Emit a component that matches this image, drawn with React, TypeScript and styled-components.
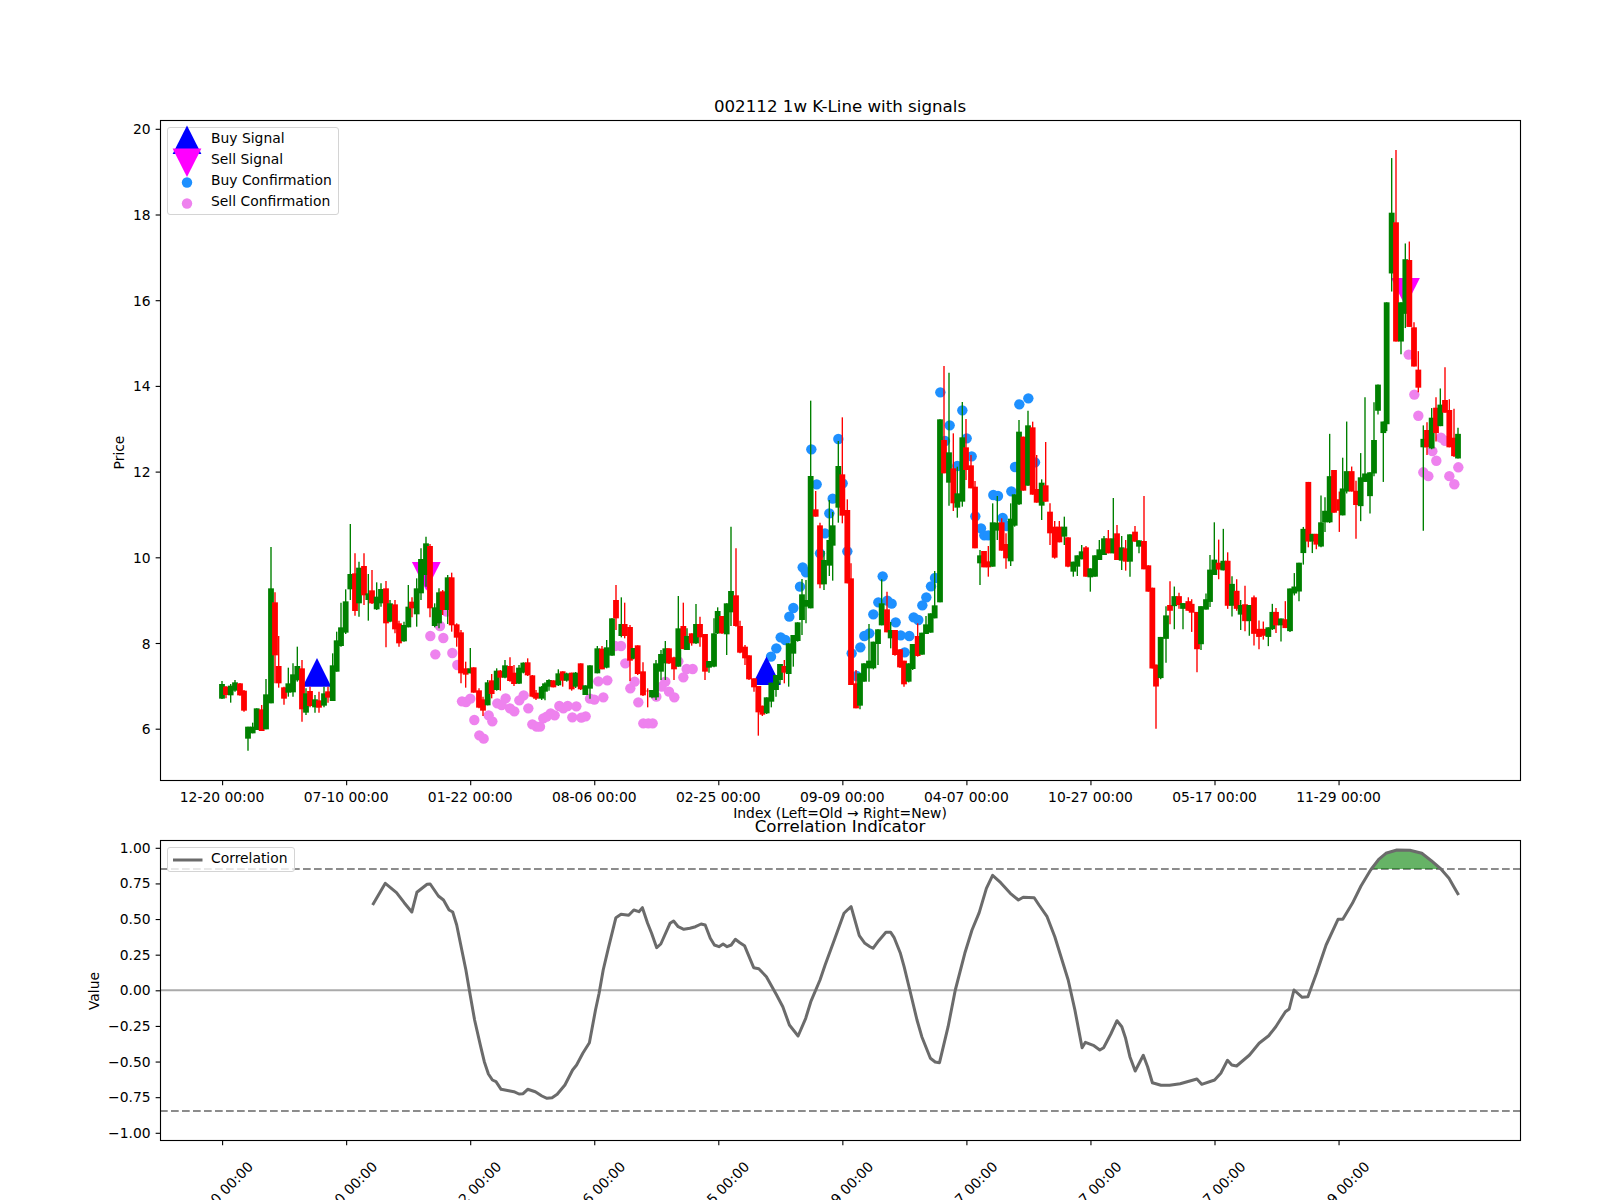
import styled, { createGlobalStyle } from "styled-components";

const GlobalStyle = createGlobalStyle`
  html, body {
    margin: 0;
    padding: 0;
    background: #fff;
    overflow: hidden;
  }
`;

const fontStack = `"DejaVu Sans", "Liberation Sans", sans-serif`;
const tickSize = 4.86;

type Candle = { x: number; up: boolean; wickTop: number; top: number; bottom: number; wickBottom: number };

// values read off the chart, one block per stretch of the x axis: x colour wickTop bodyTop bodyBottom wickBottom
const parseCandles = (x0: number, y0: number, ky: number, rows: string): Candle[] =>
  rows
    .trim()
    .split("\n")
    .map((row) => {
      const [x, c, a, b, d, e] = row.trim().split(" ");
      return {
        x: x0 + Number(x) / 3,
        up: c === "g",
        wickTop: y0 + Number(a) / ky,
        top: y0 + Number(b) / ky,
        bottom: y0 + Number(d) / ky,
        wickBottom: y0 + Number(e) / ky,
      };
    });

const candles: Candle[] = [
  ...parseCandles(200, 500, 3, `
66 g 543 552 596 597
78 r 558 560 585 595
92 g 552 557 586 608
105 g 540 547 572 575
120 r 549 550 586 587
132 r 570 572 632 635
144 g 680 680 716 752
158 g 668 680 700 700
170 g 625 625 690 690
185 r 615 628 693 693
198 g 537 583 688 688
213 g 141 265 610 610
225 r 277 307 466 550
236 r 408 498 550 563
252 r 560 562 596 614
265 g 503 550 578 590
279 g 490 523 577 590
292 g 440 498 541 545
306 r 480 505 628 665
318 g 565 580 638 645
330 r 560 573 618 622
345 g 585 598 622 638
357 r 575 601 623 638
372 g 560 580 617 622
384 r 560 574 593 608
398 g 460 496 603 603
410 g 395 421 515 515
423 g 308 382 438 440
437 g 268 304 398 402
451 g 72 222 268 300
465 r 160 220 333 347
477 g 185 203 310 350
492 r 160 198 286 315
505 g 222 280 300 362
516 r 210 271 310 312
530 g 247 290 328 330
543 g 250 267 310 320
558 r 243 265 370 442
570 g 300 310 365 367
585 r 300 313 388 400
597 r 362 370 430 440
612 g 365 375 424 425
625 g 255 320 382 382
636 r 292 305 325 352
650 g 235 265 343 380
663 g 145 177 280 300
678 g 110 130 225 260
690 r 132 138 325 352
704 g 310 322 378 382
717 g 265 277 370 385
728 r 270 274 330 345
743 g 225 232 330 372
755 r 218 232 376 395
770 r 370 373 413 440
783 r 390 397 520 550
797 r 485 505 524 563
811 g 444 505 520 520
821 r 502 502 578 578
837 r 565 571 623 625
849 r 590 598 632 648
863 g 540 547 616 616
875 r 522 541 582 595
890 g 505 512 570 572
901 r 510 512 533 572
915 g 480 496 533 535
930 r 472 498 543 545
942 r 495 518 552 558
957 g 495 503 551 552
970 g 487 488 518 520
983 r 475 487 526 528
997 r 525 526 590 592
1008 r 570 578 596 600
`),
  ...parseCandles(540, 500, 3, `
5 g 558 560 596 600
15 g 547 550 575 601
27 g 538 540 560 572
40 r 541 541 562 562
55 g 508 520 556 558
68 r 514 514 542 560
80 g 518 520 542 545
95 r 518 518 568 572
107 g 516 518 560 564
122 r 490 490 568 570
136 g 556 556 585 585
150 g 496 496 566 596
172 g 438 445 520 520
186 r 438 446 508 508
200 g 420 442 503 505
216 g 355 355 467 467
228 r 255 300 355 390
244 g 292 372 408 412
254 r 308 372 408 415
270 r 375 381 482 543
281 g 445 444 476 478
293 r 436 436 522 525
309 r 487 514 586 588
323 r 565 572 574 622
336 g 570 570 592 595
348 g 480 490 592 600
363 g 450 462 515 540
376 g 423 445 490 540
387 r 445 445 490 492
402 r 470 472 508 540
415 g 288 385 500 500
430 r 308 378 447 448
441 g 385 408 450 450
455 r 400 400 430 437
468 g 312 372 430 432
480 r 350 372 412 440
495 r 402 402 515 540
507 g 483 483 503 518
522 g 355 400 500 502
533 g 322 333 400 402
546 r 348 348 400 402
560 g 310 310 403 465
573 g 80 273 337 378
588 r 145 286 378 380
600 r 362 378 458 460
615 r 435 440 475 495
627 r 466 466 538 540
642 r 535 535 562 575
655 r 558 558 637 707
667 r 617 617 644 648
680 g 592 592 640 642
694 g 548 548 605 622
708 g 525 525 570 590
720 g 492 492 540 552
733 r 480 498 518 550
746 g 430 430 522 560
760 g 405 405 461 500
773 g 367 367 423 425
`),
  ...parseCandles(800, 340, 3, `
6 g 717 763 840 885
18 g 720 780 800 850
32 g 182 408 805 805
47 r 453 508 530 530
60 r 548 556 733 745
72 g 633 660 733 750
88 g 480 600 677 708
98 g 516 556 617 722
115 g 303 378 503 548
127 r 232 403 527 550
142 r 478 510 730 730
153 r 670 715 1035 1035
168 r 990 1030 1105 1105
180 g 1000 1000 1097 1108
192 g 970 970 1025 1025
207 g 852 962 985 1025
220 g 905 905 985 988
234 g 868 868 912 975
245 g 718 790 856 856
261 r 755 808 877 877
272 g 846 870 895 925
285 r 870 870 945 947
300 r 928 928 982 984
312 r 962 962 1033 1040
326 g 970 970 1025 1027
338 g 912 912 987 990
353 r 850 888 948 950
366 g 878 878 944 944
378 g 828 853 882 882
392 g 820 820 878 878
404 g 693 796 835 835
420 g 238 238 787 787
432 r 78 300 400 400
447 g 98 337 428 497
460 r 280 385 490 513
472 g 380 460 503 533
487 g 186 292 485 500
498 r 237 322 390 420
513 r 345 376 445 445
525 r 423 440 625 625
540 g 630 646 670 735
552 r 633 633 682 682
565 r 618 664 682 710
578 g 490 547 680 680
592 g 468 548 572 600
605 r 535 547 632 632
618 r 580 612 655 686
632 g 490 536 664 678
644 g 463 463 557 560
657 g 240 275 493 495
670 r 290 290 452 452
684 g 212 256 437 437
698 r 245 262 464 464
710 r 345 447 488 488
725 g 418 428 497 540
737 r 306 436 485 485
750 r 490 515 580 615
764 r 543 560 653 656
778 r 543 560 607 607
793 g 530 560 590 615
804 r 592 592 680 682
820 g 665 665 695 710
832 g 646 646 680 708
845 g 615 634 658 658
858 r 618 622 710 710
871 g 685 685 712 755
885 g 646 646 710 710
898 g 600 628 660 660
912 g 588 595 645 645
925 r 570 595 640 640
940 g 474 595 640 640
951 r 555 580 660 660
965 g 588 622 662 690
977 r 600 625 665 692
990 g 583 583 665 710
1005 r 558 575 605 605
1017 g 601 601 620 640
1032 r 468 603 688 688
1045 r 676 676 755 755
`),
  ...parseCandles(1120, 130, 2.6, `
97 r 1190 1190 1400 1400
108 r 1390 1390 1447 1557
122 g 1318 1318 1425 1428
138 g 1238 1262 1323 1385
150 r 1173 1235 1250 1285
163 g 1187 1212 1238 1298
177 r 1203 1212 1235 1245
189 g 1230 1230 1245 1298
205 r 1215 1225 1250 1250
215 r 1220 1232 1255 1305
231 r 1253 1253 1350 1410
243 g 1238 1238 1337 1352
258 g 1205 1220 1247 1247
270 g 1105 1143 1227 1240
283 g 1020 1117 1157 1157
296 r 1065 1125 1143 1168
310 g 1037 1120 1145 1145
323 r 1098 1120 1237 1245
336 g 1160 1180 1237 1265
350 r 1168 1198 1245 1250
362 g 1222 1235 1260 1300
375 r 1185 1233 1277 1303
388 g 1235 1235 1277 1315
402 r 1210 1215 1310 1340
417 r 1275 1297 1318 1350
430 r 1278 1297 1315 1325
445 g 1293 1293 1318 1342
457 g 1232 1253 1298 1300
468 r 1243 1253 1288 1308
483 g 1270 1270 1288 1330
496 r 1225 1272 1295 1295
510 g 1192 1192 1303 1305
523 g 1152 1187 1205 1210
537 g 1125 1125 1200 1225
550 g 1032 1037 1100 1130
565 r 915 915 1070 1085
577 g 1050 1050 1070 1100
589 r 1050 1050 1078 1090
603 g 950 1020 1083 1085
615 g 955 990 1020 1045
629 g 790 900 1020 1022
642 r 884 884 995 995
658 r 940 960 990 1045
668 g 852 932 1002 1002
680 g 758 887 940 945
695 r 875 887 940 940
708 r 912 938 975 1063
722 g 840 903 978 1017
735 g 695 893 915 915
750 g 890 890 952 997
762 g 708 806 893 900
774 g 662 662 730 740
790 g 758 758 788 915
800 g 448 448 765 783
815 g 73 215 373 420
828 r 52 240 550 550
843 g 448 448 550 583
856 g 295 336 478 515
868 r 290 338 512 512
882 r 500 513 615 615
895 r 575 623 670 682
910 g 768 803 825 1042
921 r 760 780 825 845
935 g 723 748 828 830
948 r 695 722 788 810
961 g 672 714 770 770
975 r 617 702 735 735
988 r 700 728 825 825
1002 r 725 800 848 850
1014 g 774 790 854 854
`),
];

type Point = [number, number];

const crop = (x0: number, y0: number, kx: number, ky: number, pts: number[][]): Point[] =>
  pts.map(([x, y]) => [x0 + x / kx, y0 + y / ky]);

const sellConfirm: Point[] = [
  ...crop(200, 500, 3, 3, [
    [740, 335], [720, 378], [691, 408], [730, 414], [706, 463], [757, 459], [772, 495], [786, 604], [798, 606], [811, 596],
    [823, 660], [838, 706], [851, 716], [866, 646], [877, 664], [892, 610], [905, 615], [917, 595], [930, 625], [943, 634],
    [958, 601], [971, 586], [985, 625], [997, 673], [1010, 680],
  ]),
  ...crop(540, 500, 3, 3, [
    [0, 680], [10, 655], [20, 650], [32, 640], [44, 646], [58, 618], [70, 625], [83, 618], [109, 619], [97, 652], [124, 653],
    [137, 649], [150, 596], [163, 599], [190, 592], [175, 544], [202, 541], [256, 490], [243, 438], [225, 438], [271, 565],
    [284, 545], [295, 607], [310, 670], [325, 670], [338, 670], [349, 590], [365, 560], [376, 545], [387, 575], [403, 592],
    [415, 484], [430, 532], [440, 507], [458, 507],
  ]),
  ...crop(1120, 130, 3, 2.6, [
    [866, 584], [883, 688], [895, 743], [910, 890], [925, 900], [937, 835], [949, 860], [963, 800], [975, 808], [988, 900],
    [1003, 921], [1015, 877],
  ]),
];

const buyConfirm: Point[] = [
  ...crop(540, 500, 3, 3, [
    [693, 470], [709, 445], [722, 412], [736, 420], [748, 350], [760, 324],
  ]),
  ...crop(800, 340, 3, 3, [
    [0, 740], [8, 682], [18, 697], [34, 328], [50, 433], [60, 640], [75, 580], [88, 520], [98, 476], [115, 297], [128, 430],
    [142, 634], [155, 940], [170, 1008], [181, 922], [193, 888], [208, 880], [220, 823], [235, 787], [248, 709], [262, 782],
    [275, 791], [287, 847], [302, 886], [314, 937], [328, 888], [341, 832], [355, 840], [367, 796], [379, 772], [393, 739],
    [405, 714], [421, 157], [435, 303], [449, 256], [472, 378], [487, 211], [500, 295], [515, 349], [526, 529], [543, 565],
    [553, 586], [565, 586], [580, 465], [594, 468], [608, 534], [620, 558], [634, 454], [645, 381], [658, 193], [685, 175],
    [705, 367],
  ]),
];

const correlation: Point[] = [
  ...crop(70, 770, 1.96, 3, [
    [593, 405], [618, 340], [640, 368], [655, 398], [670, 426], [680, 367], [700, 343], [706, 342], [722, 378], [732, 390],
    [743, 420], [750, 426], [758, 465], [768, 540], [776, 600], [785, 680], [793, 750], [805, 830], [812, 875], [820, 912],
    [828, 930], [835, 935], [845, 958], [860, 962], [870, 965], [880, 972], [888, 971], [897, 958], [912, 965], [925, 978],
    [935, 985], [945, 983], [955, 973], [970, 945], [985, 900], [993, 885], [1005, 850], [1018, 818], [1030, 720], [1037, 670],
    [1045, 600], [1055, 535], [1070, 443], [1080, 433], [1095, 436], [1105, 420], [1115, 425], [1122, 413], [1132, 460],
    [1140, 490], [1150, 533], [1158, 522], [1176, 460], [1183, 453], [1192, 470], [1203, 478], [1215, 475], [1226, 470],
    [1237, 462], [1245, 465], [1255, 505], [1263, 525], [1272, 530], [1280, 522], [1288, 530], [1296, 525], [1304, 508],
    [1313, 518], [1322, 527], [1340, 593], [1350, 596], [1365, 620], [1385, 675], [1397, 710], [1410, 765], [1427, 798],
    [1442, 745], [1452, 695], [1470, 630], [1480, 585], [1498, 510], [1517, 430], [1525, 418], [1531, 410], [1547, 497],
    [1558, 520], [1568, 530],
  ]),
  ...crop(850, 770, 2.09, 3, [
    [48, 535], [60, 512], [75, 487], [85, 487], [92, 502], [105, 548], [113, 590], [125, 660], [140, 750], [150, 800], [168, 865],
    [178, 876], [187, 878], [205, 770], [220, 660], [240, 550], [255, 480], [270, 428], [285, 355], [298, 316], [315, 338],
    [335, 370], [352, 390], [362, 382], [385, 383], [395, 405], [412, 440], [428, 500], [456, 630], [470, 720], [485, 833],
    [492, 817], [510, 827], [522, 840], [530, 833], [545, 792], [558, 752], [568, 770], [576, 805], [585, 860], [596, 903],
    [613, 856], [622, 890], [632, 938], [650, 946], [668, 946], [690, 941], [725, 927], [735, 943], [762, 930], [775, 910],
    [789, 871], [798, 885], [808, 888], [835, 855], [855, 820], [875, 797], [890, 770], [910, 725], [918, 717], [928, 660],
    [945, 682], [957, 680], [975, 610], [995, 525], [1020, 448], [1030, 448], [1050, 400], [1068, 348], [1088, 300], [1105, 268],
    [1120, 250], [1143, 240], [1170, 241], [1195, 250], [1215, 272], [1235, 297], [1252, 325], [1262, 350], [1272, 375],
  ]),
];

const thresholdY = 869;

// area between the line and the 0.85 threshold, closed at both crossings
const overbought: Point[] = [
  [1371.5, thresholdY],
  ...correlation.filter(([x, y]) => y < thresholdY && x > 1371.5 && x < 1442.3),
  [1442.3, thresholdY],
];

const xTicks = [
  "12-20 00:00", "07-10 00:00", "01-22 00:00", "08-06 00:00", "02-25 00:00",
  "09-09 00:00", "04-07 00:00", "10-27 00:00", "05-17 00:00", "11-29 00:00",
].map((label, i) => ({ label, x: 222.6 + 124.05 * i }));

const priceTicks = [6, 8, 10, 12, 14, 16, 18, 20].map((p) => ({ label: String(p), y: 129.3 + (20 - p) * 42.85 }));

const valueTicks = [1, 0.75, 0.5, 0.25, 0, -0.25, -0.5, -0.75, -1].map((v) => ({
  label: (v < 0 ? "\u2212" : "") + Math.abs(v).toFixed(2),
  y: 990.8 - 142.5 * v,
}));

const toPoints = (pts: Point[]) => pts.map(([x, y]) => `${x.toFixed(1)},${y.toFixed(1)}`).join(" ");

const Figure = styled.div`
  width: 1600px;
  height: 1200px;
  background: #fff;
  font-family: ${fontStack};
  color: #000;
  display: flex;
  flex-direction: column;
`;

const Panel = styled.section<{ $height: number }>`
  position: relative;
  height: ${(p) => p.$height}px;
  flex: none;
`;

const ChartSvg = styled.svg`
  display: block;
  width: 100%;
  height: 100%;
  overflow: visible;
`;

const Frame = styled.rect`
  fill: none;
  stroke: #000;
  stroke-width: 1.11;
`;

const TickMark = styled.line`
  stroke: #000;
  stroke-width: 1.11;
`;

const TickLabel = styled.text<{ $anchor?: string }>`
  font-family: ${fontStack};
  font-size: 13.89px;
  fill: #000;
  text-anchor: ${(p) => p.$anchor ?? "middle"};
`;

const AxisTitle = styled.text`
  font-family: ${fontStack};
  font-size: 13.89px;
  fill: #000;
  text-anchor: middle;
`;

const PlotTitle = styled.text`
  font-family: ${fontStack};
  font-size: 16.67px;
  fill: #000;
  text-anchor: middle;
`;

const Wick = styled.line<{ $up: boolean }>`
  stroke: ${(p) => (p.$up ? "#008000" : "#ff0000")};
  stroke-width: 1.39;
`;

const Body = styled.rect<{ $up: boolean }>`
  fill: ${(p) => (p.$up ? "#008000" : "#ff0000")};
`;

const Dot = styled.circle<{ $color: string }>`
  fill: ${(p) => p.$color};
`;

const Marker = styled.polygon<{ $color: string }>`
  fill: ${(p) => p.$color};
`;

const RefLine = styled.line<{ $dashed?: boolean }>`
  stroke: ${(p) => (p.$dashed ? "#8c8c8c" : "#aaaaaa")};
  stroke-width: 2.08;
  stroke-dasharray: ${(p) => (p.$dashed ? "7.7 3.3" : "none")};
`;

const CorrLine = styled.polyline`
  fill: none;
  stroke: #6b6b6b;
  stroke-width: 3;
  stroke-linejoin: round;
`;

const CorrFill = styled.polygon`
  fill: #008000;
  fill-opacity: 0.6;
`;

const Legend = styled.div<{ $left: number; $top: number; $width: number }>`
  position: absolute;
  left: ${(p) => p.$left}px;
  top: ${(p) => p.$top}px;
  width: ${(p) => p.$width}px;
  box-sizing: border-box;
  padding: 0 0 2px;
  background: rgba(255, 255, 255, 0.8);
  border: 1px solid #d4d4d4;
  border-radius: 3px;
  display: flex;
  flex-direction: column;
`;

const LegendRow = styled.div`
  display: flex;
  align-items: center;
  height: 21px;
  font-size: 13.89px;
  line-height: 21px;
  white-space: nowrap;
  color: #000;
`;

const LegendKey = styled.svg`
  flex: none;
  display: block;
  width: 43px;
  height: 21px;
  overflow: visible;
`;

const SAMPLE_X = 19;

const triangleUp = (cx: number, baseY: number) =>
  `${cx - 14.4},${baseY} ${cx + 14.4},${baseY} ${cx},${baseY - 28.6}`;
const triangleDown = (cx: number, baseY: number) =>
  `${cx - 14.4},${baseY} ${cx + 14.4},${baseY} ${cx},${baseY + 28.6}`;

const Candles = () => (
  <g>
    {candles.map((c) => (
      <g key={c.x}>
        <Wick $up={c.up} x1={c.x} x2={c.x} y1={c.wickTop} y2={c.wickBottom} />
        <Body $up={c.up} x={c.x - 2.9} width={5.8} y={c.top} height={c.bottom - c.top} />
      </g>
    ))}
  </g>
);

const PricePanel = () => (
  <Panel $height={820}>
    <ChartSvg viewBox="0 0 1600 820">
      <PlotTitle x={840} y={111.7}>002112 1w K-Line with signals</PlotTitle>

      {sellConfirm.map(([x, y]) => (
        <Dot key={`${x}-${y}`} $color="#ee82ee" cx={x} cy={y} r={5.2} />
      ))}
      {buyConfirm.map(([x, y]) => (
        <Dot key={`${x}-${y}`} $color="#1e90ff" cx={x} cy={y} r={5.2} />
      ))}
      <Marker $color="#0000ff" points={triangleUp(317, 686.7)} />
      <Marker $color="#0000ff" points={triangleUp(766.5, 685)} />
      <Marker $color="#ff00ff" points={triangleDown(426.3, 562)} />
      <Marker $color="#ff00ff" points={triangleDown(1405.5, 278)} />
      <Candles />

      <Frame x={160.5} y={120.5} width={1360} height={660} />
      {xTicks.map((t) => (
        <g key={t.label}>
          <TickMark x1={t.x} x2={t.x} y1={780.5} y2={780.5 + tickSize} />
          <TickLabel x={t.x - 0.5} y={801.5}>{t.label}</TickLabel>
        </g>
      ))}
      {priceTicks.map((t) => (
        <g key={t.label}>
          <TickMark x1={160.5 - tickSize} x2={160.5} y1={t.y} y2={t.y} />
          <TickLabel $anchor="end" x={150.6} y={t.y + 5}>{t.label}</TickLabel>
        </g>
      ))}
      <AxisTitle x={840} y={818}>Index (Left=Old → Right=New)</AxisTitle>
      <AxisTitle x={124} y={452.5} transform="rotate(-90 124 452.5)">Price</AxisTitle>
    </ChartSvg>

    <Legend $left={167} $top={127} $width={172}>
      <LegendRow>
        <LegendKey><Marker $color="#0000ff" points={triangleUp(SAMPLE_X, 26)} /></LegendKey>
        Buy Signal
      </LegendRow>
      <LegendRow>
        <LegendKey><Marker $color="#ff00ff" points={triangleDown(SAMPLE_X, -0.5)} /></LegendKey>
        Sell Signal
      </LegendRow>
      <LegendRow>
        <LegendKey><Dot $color="#1e90ff" cx={SAMPLE_X} cy={12.5} r={5.2} /></LegendKey>
        Buy Confirmation
      </LegendRow>
      <LegendRow>
        <LegendKey><Dot $color="#ee82ee" cx={SAMPLE_X} cy={12.5} r={5.2} /></LegendKey>
        Sell Confirmation
      </LegendRow>
    </Legend>
  </Panel>
);

const CorrelationPanel = () => (
  <Panel $height={380}>
    <ChartSvg viewBox="0 820 1600 380">
      <PlotTitle x={840} y={832}>Correlation Indicator</PlotTitle>

      <RefLine x1={160} x2={1520} y1={990.3} y2={990.3} />
      <RefLine $dashed x1={160} x2={1520} y1={thresholdY} y2={thresholdY} />
      <RefLine $dashed x1={160} x2={1520} y1={1111} y2={1111} />
      <CorrFill points={toPoints(overbought)} />
      <CorrLine points={toPoints(correlation)} />

      <Frame x={160.5} y={840.5} width={1360} height={300} />
      {xTicks.map((t) => (
        <g key={t.label}>
          <TickMark x1={t.x} x2={t.x} y1={1140.5} y2={1140.5 + tickSize} />
          <TickLabel x={t.x - 2} y={1199} transform={`rotate(-45 ${t.x - 2} 1194)`}>{t.label}</TickLabel>
        </g>
      ))}
      {valueTicks.map((t) => (
        <g key={t.label}>
          <TickMark x1={160.5 - tickSize} x2={160.5} y1={t.y} y2={t.y} />
          <TickLabel $anchor="end" x={150.6} y={t.y + 4.5}>{t.label}</TickLabel>
        </g>
      ))}
      <AxisTitle x={98.5} y={991} transform="rotate(-90 98.5 991)">Value</AxisTitle>
    </ChartSvg>

    <Legend $left={167} $top={27} $width={128}>
      <LegendRow>
        <LegendKey>
          <CorrLine points="5,12 34.5,12" />
        </LegendKey>
        Correlation
      </LegendRow>
    </Legend>
  </Panel>
);

export default function App() {
  return (
    <>
      <GlobalStyle />
      <Figure>
        <PricePanel />
        <CorrelationPanel />
      </Figure>
    </>
  );
}
